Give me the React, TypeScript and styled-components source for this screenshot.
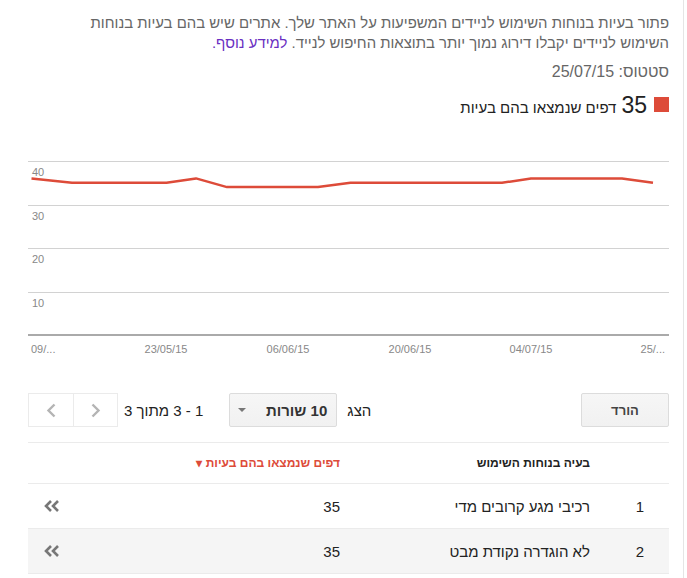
import React from 'react'
import styled, { createGlobalStyle } from 'styled-components'

const GlobalStyle = createGlobalStyle`
  html, body {
    margin: 0;
    padding: 0;
    background: #fff;
  }
  body {
    font-family: "Liberation Sans", Arial, sans-serif;
  }
`

const Page = styled.div`
  direction: rtl;
  box-sizing: border-box;
  width: 684px;
  min-height: 578px;
  border-right: 1px solid #e5e5e5;
  padding: 13px 14px 0 28px;
`

const Description = styled.p`
  margin: 0;
  font-size: 14.9px;
  line-height: 20px;
  color: #666;
`

const MoreLink = styled.a`
  color: #6a2fc2;
  text-decoration: none;
`

const Status = styled.div`
  margin-top: 9px;
  font-size: 16px;
  line-height: 20px;
  color: #666;
`

const Legend = styled.div`
  display: flex;
  align-items: baseline;
  margin-top: 10px;
  height: 24px;
`

const Swatch = styled.span`
  display: inline-block;
  width: 15px;
  height: 15px;
  background: #dd4b39;
  margin-left: 7px;
  align-self: center;
`

const LegendValue = styled.span`
  font-size: 23px;
  color: #222;
  margin-left: 5px;
`

const LegendLabel = styled.span`
  font-size: 15px;
  color: #222;
`

const ChartBox = styled.div`
  direction: ltr;
  margin-top: 34px;
  height: 210px;

  svg {
    display: block;
  }
  text {
    font-family: "Liberation Sans", Arial, sans-serif;
    font-size: 11px;
    fill: #888;
  }
`

const Toolbar = styled.div`
  display: flex;
  justify-content: space-between;
  align-items: center;
  margin-top: 33px;
  height: 34px;
`

const Group = styled.div`
  display: flex;
  align-items: center;
`

const GreyButton = styled.button`
  box-sizing: border-box;
  height: 34px;
  border: 1px solid #dcdcdc;
  border-radius: 2px;
  background: linear-gradient(#f6f6f6, #f1f1f1);
  font-family: inherit;
  font-weight: bold;
  font-size: 13px;
  color: #444;
  padding: 0;
  cursor: pointer;
`

const DownloadButton = styled(GreyButton)`
  width: 88px;
`

const ShowLabel = styled.span`
  font-size: 15px;
  color: #222;
  margin-left: 10px;
`

const Select = styled(GreyButton)`
  display: flex;
  align-items: center;
  justify-content: space-between;
  width: 108px;
  padding: 0 9px 0 8px;
  font-size: 15px;
  color: #333;
`

const Caret = styled.span`
  width: 0;
  height: 0;
  border-left: 4px solid transparent;
  border-right: 4px solid transparent;
  border-top: 4px solid #777;
`

const Range = styled.span`
  font-size: 15px;
  color: #222;
  margin: 0 26px 0 6px;
`

const Pager = styled.div`
  display: flex;
  box-sizing: border-box;
  height: 34px;
  border: 1px solid #ebebeb;
`

const PagerButton = styled.button<{ $first?: boolean }>`
  width: 44px;
  height: 100%;
  border: 0;
  border-left: ${({ $first }) => ($first ? '1px solid #ebebeb' : '0')};
  background: #fff;
  display: flex;
  align-items: center;
  justify-content: center;
  padding: 0;
`

const Table = styled.div`
  margin-top: 15px;
  border-bottom: 1px solid #ebebeb;
`

const Row = styled.div<{ $head?: boolean; $shade?: boolean }>`
  display: grid;
  grid-template-columns: 79px 250px 1fr 60px;
  align-items: center;
  height: ${({ $head }) => ($head ? '40px' : '44px')};
  border-top: 1px solid #ebebeb;
  background: ${({ $shade }) => ($shade ? '#f5f5f5' : '#fff')};
  font-size: ${({ $head }) => ($head ? '12px' : '15px')};
  font-weight: ${({ $head }) => ($head ? 'bold' : 'normal')};
  color: #222;
`

const IndexCell = styled.span`
  padding-right: 25px;
`

const SortHead = styled.span`
  color: #dd4b39;
`

const ActionCell = styled.span`
  display: flex;
  justify-content: flex-end;
  padding-left: 15px;
`

const points: [number, number][] = [
  [3.5, 36], [44, 35], [138.5, 35], [168, 36], [199, 34], [290, 34],
  [322.5, 35], [474, 35], [503, 36], [594, 36], [625, 35],
]

const axisY = 185
const scale = 4.35
const toY = (v: number) => axisY - v * scale

function Chart() {
  const line = points.map(([x, v]) => `${x},${toY(v).toFixed(1)}`).join(' ')
  return (
    <ChartBox>
      <svg width="641" height="210" viewBox="0 0 641 210">
        {[40, 30, 20, 10].map((v) => {
          const y = Math.round(toY(v)) + 0.5
          return (
            <g key={v}>
              <line x1="0" x2="641" y1={y} y2={y} stroke="#d2d2d2" strokeWidth="1" />
              <text x="4" y={y + 14}>{v}</text>
            </g>
          )
        })}
        <line x1="0" x2="641" y1={axisY} y2={axisY} stroke="#aaa" strokeWidth="2" />
        <polyline points={line} fill="none" stroke="#dd4b39" strokeWidth="2.5" strokeLinejoin="round" />
        <text x="3" y="203">09/...</text>
        <text x="138" y="203" textAnchor="middle">23/05/15</text>
        <text x="260" y="203" textAnchor="middle">06/06/15</text>
        <text x="382" y="203" textAnchor="middle">20/06/15</text>
        <text x="503" y="203" textAnchor="middle">04/07/15</text>
        <text x="637" y="203" textAnchor="end">25/...</text>
      </svg>
    </ChartBox>
  )
}

const Chevron = ({ dir }: { dir: 'left' | 'right' }) => (
  <svg width="10" height="15" viewBox="0 0 10 15">
    <path
      d={dir === 'left' ? 'M8.5 1.5 L2.5 7.5 L8.5 13.5' : 'M1.5 1.5 L7.5 7.5 L1.5 13.5'}
      fill="none"
      stroke="#b4b4b4"
      strokeWidth="2.4"
    />
  </svg>
)

const DoubleChevron = () => (
  <svg width="17" height="14" viewBox="0 0 17 14">
    <path d="M8 2 L3 7 L8 12 M15 2 L10 7 L15 12" fill="none" stroke="#777" strokeWidth="2.6" />
  </svg>
)

const issues = [
  { id: 1, name: 'רכיבי מגע קרובים מדי', pages: 35 },
  { id: 2, name: 'לא הוגדרה נקודת מבט', pages: 35 },
]

export default function App() {
  return (
    <>
      <GlobalStyle />
      <Page>
        <Description>
          פתור בעיות בנוחות השימוש לניידים המשפיעות על האתר שלך. אתרים שיש בהם בעיות בנוחות
          <br />
          השימוש לניידים יקבלו דירוג נמוך יותר בתוצאות החיפוש לנייד.{' '}
          <MoreLink href="#">למידע נוסף.</MoreLink>
        </Description>
        <Status>סטטוס: 25/07/15</Status>
        <Legend>
          <Swatch />
          <LegendValue>35</LegendValue>
          <LegendLabel>דפים שנמצאו בהם בעיות</LegendLabel>
        </Legend>
        <Chart />
        <Toolbar>
          <DownloadButton>הורד</DownloadButton>
          <Group>
            <ShowLabel>הצג</ShowLabel>
            <Select>
              <span>10 שורות</span>
              <Caret />
            </Select>
            <Range>1 - 3 מתוך 3</Range>
            <Pager>
              <PagerButton $first>
                <Chevron dir="right" />
              </PagerButton>
              <PagerButton>
                <Chevron dir="left" />
              </PagerButton>
            </Pager>
          </Group>
        </Toolbar>
        <Table>
          <Row $head>
            <span />
            <span>בעיה בנוחות השימוש</span>
            <SortHead>דפים שנמצאו בהם בעיות ▾</SortHead>
            <span />
          </Row>
          {issues.map((it, i) => (
            <Row key={it.id} $shade={i % 2 === 1}>
              <IndexCell>{it.id}</IndexCell>
              <span>{it.name}</span>
              <span>{it.pages}</span>
              <ActionCell>
                <DoubleChevron />
              </ActionCell>
            </Row>
          ))}
        </Table>
      </Page>
    </>
  )
}
